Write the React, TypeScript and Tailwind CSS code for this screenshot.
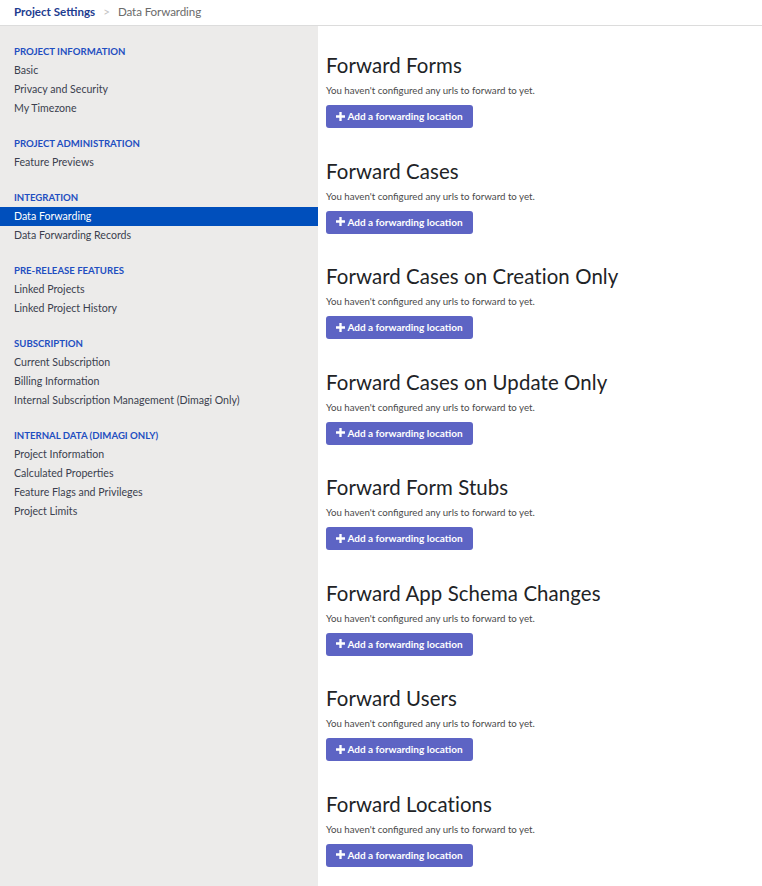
import React from "react";

const sections: { title: string; items: string[] }[] = [
  { title: "PROJECT INFORMATION", items: ["Basic", "Privacy and Security", "My Timezone"] },
  { title: "PROJECT ADMINISTRATION", items: ["Feature Previews"] },
  { title: "INTEGRATION", items: ["Data Forwarding", "Data Forwarding Records"] },
  { title: "PRE-RELEASE FEATURES", items: ["Linked Projects", "Linked Project History"] },
  {
    title: "SUBSCRIPTION",
    items: ["Current Subscription", "Billing Information", "Internal Subscription Management (Dimagi Only)"],
  },
  {
    title: "INTERNAL DATA (DIMAGI ONLY)",
    items: ["Project Information", "Calculated Properties", "Feature Flags and Privileges", "Project Limits"],
  },
];

const forwards = [
  "Forward Forms",
  "Forward Cases",
  "Forward Cases on Creation Only",
  "Forward Cases on Update Only",
  "Forward Form Stubs",
  "Forward App Schema Changes",
  "Forward Users",
  "Forward Locations",
];

export default function App() {
  return (
    <div className="w-[762px] h-[886px] overflow-hidden bg-white flex flex-col" style={{ fontFamily: "Lato, 'Open Sans', sans-serif" }}>
      <div className="h-[26px] shrink-0 border-b border-[#dcdcdc] flex items-start pt-[5px] pl-[14px] text-[11.6px] leading-[13px]">
        <span className="font-bold text-[#1d3c8f]">Project Settings</span>
        <span className="text-[#c4c4c4] mx-[8px]">&gt;</span>
        <span className="text-[#6b6b6b] tracking-[-0.1px]">Data Forwarding</span>
      </div>
      <div className="flex flex-1 min-h-0">
        <div className="w-[318px] shrink-0 bg-[#ecebea] pt-[16px]">
          {sections.map((s) => (
            <div key={s.title} className="mb-[16px]">
              <div className="h-[19px] leading-[19px] pl-[14px] text-[9.6px] font-bold text-[#1f4fc1]">{s.title}</div>
              {s.items.map((it) => {
                const active = it === "Data Forwarding";
                return (
                  <div
                    key={it}
                    className={
                      active
                        ? "h-[19px] leading-[18px] pl-[14px] text-[10.6px] bg-[#004fbc] text-white"
                        : "h-[19px] leading-[18px] pl-[14px] text-[10.6px] text-[#3b3f4e]"
                    }
                  >
                    {it}
                  </div>
                );
              })}
            </div>
          ))}
        </div>
        <div className="flex-1 pl-[8px] pt-[27px]">
          {forwards.map((f) => (
            <div key={f} className="mb-[30.57px]">
              <div className="h-[24px] leading-[24px] text-[20.4px] text-[#212326] tracking-[0.1px]">{f}</div>
              <div className="mt-[6px] h-[14px] leading-[14px] text-[9.7px] text-[#4a4a4a]">You haven't configured any urls to forward to yet.</div>
              <button className="mt-[8px] h-[23px] w-[147px] rounded-[3px] bg-[#5d64c4] text-white text-[10px] font-bold flex items-center justify-center gap-[2px]">
                <svg width="9" height="9" viewBox="0 0 10 10" className="mb-[1px]">
                  <path d="M3.7 0h2.6v3.7H10v2.6H6.3V10H3.7V6.3H0V3.7h3.7z" fill="white" />
                </svg>
                <span>Add a forwarding location</span>
              </button>
            </div>
          ))}
        </div>
      </div>
    </div>
  );
}
